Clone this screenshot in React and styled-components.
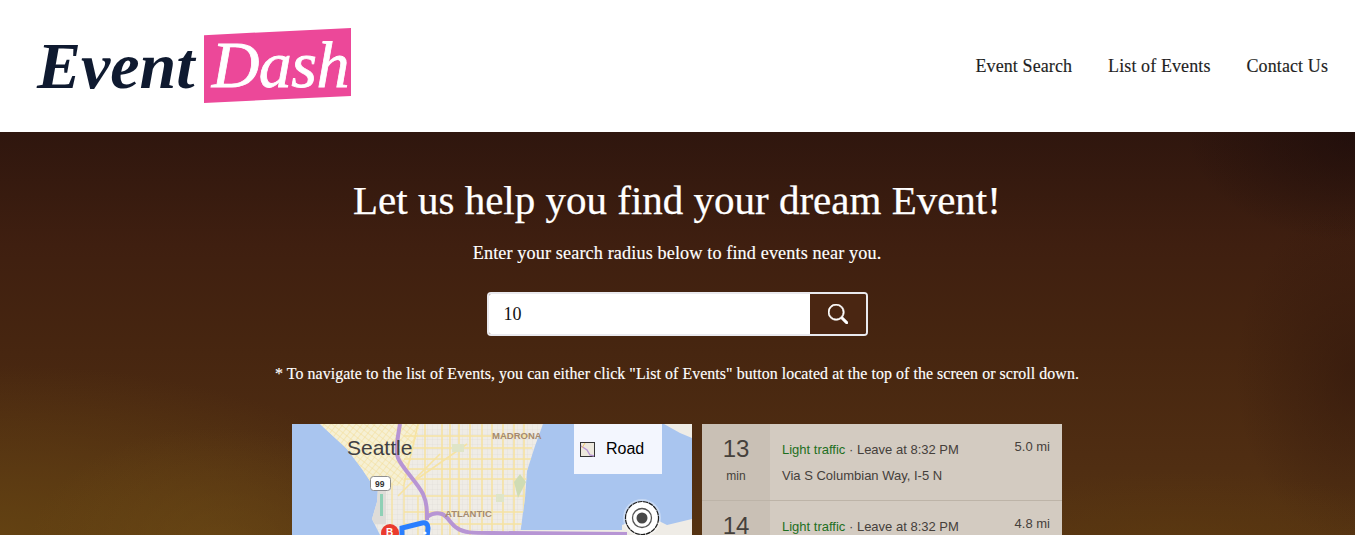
import React from "react";
import styled, { createGlobalStyle } from "styled-components";
import { BsSearch } from "react-icons/bs";

const serif = `"Liberation Serif", "Times New Roman", serif`;
const sans = `"Liberation Sans", Arial, sans-serif`;

const GlobalStyle = createGlobalStyle`
  html, body {
    margin: 0;
    height: 100%;
    overflow: hidden;
    background: #fff;
    font-family: ${serif};
  }
`;

const Page = styled.div`
  height: 535px;
  overflow: hidden;
`;

const Header = styled.header`
  display: flex;
  justify-content: space-between;
  align-items: center;
  height: 132px;
  padding: 0 27px 0 37px;
  box-sizing: border-box;
  background: #fff;
`;

const Logo = styled.div`
  display: flex;
  align-items: center;
  margin-top: -1px;
  font-family: ${serif};
  font-style: italic;
  font-size: 66px;
  line-height: 1;
`;

const LogoEvent = styled.span`
  width: 167px;
  color: #0f1a30;
  font-weight: 700;
`;

const LogoDash = styled.span`
  display: flex;
  align-items: center;
  justify-content: flex-end;
  box-sizing: border-box;
  width: 147px;
  height: 75px;
  padding: 0 2px 2px 0;
  color: #fff;
  background: #ec4899;
  letter-spacing: -0.5px;
  -webkit-text-stroke: 0.8px #fff;
  clip-path: polygon(0 9.5%, 100% 0, 100% 90.5%, 0 100%);
`;

const Nav = styled.nav`
  display: flex;
  gap: 36px;
`;

const NavLink = styled.a`
  color: #1f1f1f;
  font-size: 18px;
  letter-spacing: 0.1px;
  -webkit-text-stroke: 0.15px #1f1f1f;
`;

const Hero = styled.section`
  display: flex;
  flex-direction: column;
  align-items: center;
  height: 403px;
  padding: 46px 1px 0 0;
  box-sizing: border-box;
  color: #fff;
  background:
    radial-gradient(ellipse 190px 130px at 215px 425px, rgba(112, 78, 22, 0.55), transparent),
    radial-gradient(ellipse 420px 170px at 0 403px, rgba(105, 72, 18, 0.7), transparent),
    radial-gradient(ellipse 260px 70px at 1180px 410px, rgba(95, 60, 15, 0.5), transparent),
    radial-gradient(ellipse 170px 110px at 1355px 0, rgba(25, 10, 10, 0.6), transparent),
    radial-gradient(ellipse 120px 170px at 1355px 240px, rgba(45, 20, 12, 0.5), transparent),
    linear-gradient(180deg, #2f160e 0%, #3f1f10 28%, #472610 55%, #4f2d12 80%, #553312 100%);
  & > * {
    flex: none;
  }
`;

const Title = styled.h1`
  margin: 0;
  font-size: 41px;
  font-weight: 400;
  line-height: 44px;
  -webkit-text-stroke: 0.25px #fff;
`;

const Subtitle = styled.p`
  margin: 19px 0 0;
  font-size: 18.2px;
  line-height: 24px;
  letter-spacing: 0.12px;
  -webkit-text-stroke: 0.15px #fff;
`;

const SearchForm = styled.form`
  display: flex;
  box-sizing: border-box;
  width: 381px;
  height: 44px;
  margin-top: 27px;
  border: 2px solid #e9e9ee;
  border-radius: 4px;
  overflow: hidden;
`;

const SearchInput = styled.input`
  flex: 1;
  min-width: 0;
  padding: 0 15px;
  border: 0;
  outline: 0;
  background: #fff;
  color: #111;
  font-family: ${serif};
  font-size: 18px;
`;

const SearchButton = styled.button`
  display: flex;
  align-items: center;
  justify-content: center;
  width: 56px;
  padding: 0;
  border: 0;
  background: #4a2612;
  color: #fff;
  font-size: 20px;
`;

const Note = styled.p`
  margin: 27px 0 0;
  font-size: 15.9px;
  line-height: 22px;
  letter-spacing: 0.07px;
  -webkit-text-stroke: 0.15px #fff;
`;

const Widgets = styled.div`
  display: flex;
  gap: 10px;
  margin-top: 39px;
`;

const MapBox = styled.div`
  position: relative;
  width: 400px;
  height: 300px;
  overflow: hidden;
  background: #a9c5ef;
`;

const MapLabel = styled.text`
  font-family: ${sans};
  font-size: ${(p) => p.$size}px;
  font-weight: ${(p) => (p.$bold ? 700 : 400)};
  fill: ${(p) => p.$color};
`;

const RoadToggle = styled.div`
  position: absolute;
  top: 0;
  left: 282px;
  display: flex;
  align-items: center;
  gap: 11px;
  box-sizing: border-box;
  width: 88px;
  height: 50px;
  padding-left: 6px;
  background: #f3f6fe;
  color: #000;
  font-family: ${sans};
  font-size: 16px;
`;

const Directions = styled.div`
  width: 360px;
  height: 300px;
  background: #d3cbc1;
  color: #45403b;
  font-family: ${sans};
`;

const Route = styled.div`
  display: flex;
  height: 76px;
  border-bottom: 1px solid #bdb4a8;
`;

const Duration = styled.div`
  display: flex;
  flex-direction: column;
  align-items: center;
  flex: none;
  width: 68px;
  padding-top: 11px;
  box-sizing: border-box;
  background: #c9c0b5;
`;

const Minutes = styled.span`
  font-size: 24px;
  line-height: 28px;
`;

const MinLabel = styled.span`
  margin-top: 5px;
  font-size: 12px;
  line-height: 16px;
`;

const RouteInfo = styled.div`
  flex: 1;
  padding: 17px 12px 0;
  font-size: 13px;
`;

const RouteTop = styled.div`
  display: flex;
  justify-content: space-between;
  line-height: 18px;
`;

const Traffic = styled.span`
  color: #1e6f1e;
`;

const Distance = styled.span`
  margin-top: -3px;
`;

const Via = styled.div`
  margin-top: 8px;
  line-height: 18px;
`;

const verticals = [133, 150, 158, 167, 178, 190, 200, 211, 222, 232];
const horizontals = [12, 24, 35, 45, 55, 72, 88, 100];
const shoreLand =
  "M28 0 L55 25 L70 45 L80 60 L86 64 L85 78 L80 95 L88 111 L88 140 L228 140 L228 111 L233 74 L235 47 L243 22 L251 0 Z";

const MapArt = () => (
  <svg width="400" height="300" viewBox="0 0 400 300">
    <defs>
      <pattern id="blocks" width="5" height="5" patternUnits="userSpaceOnUse">
        <rect width="5" height="5" fill="#efece6" />
        <path d="M0 0H5M0 0V5" stroke="#dcdad6" strokeWidth="0.6" />
      </pattern>
      <pattern id="downtown" width="5" height="5" patternUnits="userSpaceOnUse" patternTransform="rotate(38)">
        <rect width="5" height="5" fill="#f6f0d4" />
        <path d="M0 0H5M0 0V5" stroke="#f2dd97" strokeWidth="1" />
      </pattern>
      <clipPath id="land">
        <path d={shoreLand} />
      </clipPath>
    </defs>

    <path d={shoreLand} fill="url(#blocks)" />
    <path d="M372 0 L400 0 L400 14 L388 9 Z" fill="#efece6" />
    <path d="M330 101 L342 97 L367 97 L375 101 L400 95 L400 140 L330 140 Z" fill="#efece6" />
    <path d="M228 140 L228 106 L330 106 L330 140 Z" fill="#efece6" />

    <g clipPath="url(#land)">
      <path d="M28 0 L128 0 L112 62 L80 60 Z" fill="url(#downtown)" />
      <rect x="80" y="66" width="14" height="34" fill="#dedcd8" />
      <rect x="88" y="70" width="3" height="22" fill="#8fd0b5" />
      {verticals.map((x) => (
        <path key={x} d={`M${x} 0V111`} stroke="#f6e3a2" strokeWidth="1.6" />
      ))}
      {horizontals.map((y) => (
        <path key={y} d={`M112 ${y}H240`} stroke="#f6e3a2" strokeWidth="1.6" />
      ))}
      <path d="M126 0 L112 60 M118 60 L175 20 M106 72 L148 30" stroke="#f6e3a2" strokeWidth="1.6" fill="none" />
      <path d="M100 60V111M112 60V111M126 72V111" stroke="#f6e3a2" strokeWidth="1.4" />
      <path d="M222 58 L228 50 L234 58 L226 74 Z" fill="#cfdcb4" />
      <path d="M160 20 h12 v8 h-12 Z M204 70 h8 v8 h-8 Z" fill="#dfe5c8" />
    </g>

    <path
      d="M108 0 C106 12 103 26 106 34 C110 44 125 58 131 70 C135 79 135 86 135 96"
      fill="none"
      stroke="#b795d4"
      strokeWidth="4"
    />
    <path
      d="M135 93 C139 90 144 88 150 90 C156 92 158 100 165 104 C172 109 180 109 200 109 L335 110"
      fill="none"
      stroke="#b795d4"
      strokeWidth="4"
    />
    <path d="M110 114 L110 104 L130 99 Q136 98 136 104 L135 114" fill="none" stroke="#2a7fff" strokeWidth="5" />
    <circle cx="133" cy="109" r="1.6" fill="#fff" />
    <circle cx="98" cy="109" r="9" fill="#ea3b2e" />
    <MapLabel x="94" y="112" $size={10} $bold $color="#fff">B</MapLabel>

    <MapLabel x="55" y="31" $size={21} $color="#3f3f44">Seattle</MapLabel>
    <MapLabel x="200" y="15" $size={9.5} $bold $color="#a58a6f">MADRONA</MapLabel>
    <MapLabel x="153" y="93" $size={9.5} $bold $color="#a58a6f">ATLANTIC</MapLabel>

    <rect x="78.5" y="52.5" width="20" height="14" rx="3" fill="#fff" stroke="#8f8f8f" />
    <MapLabel x="83" y="63" $size={8.5} $bold $color="#333">99</MapLabel>

    <circle cx="350" cy="94" r="19" fill="#fff" opacity="0.35" />
    <circle cx="350" cy="94" r="16.5" fill="#fff" stroke="#1c1c1c" strokeWidth="1.2" strokeDasharray="5 0.6" />
    <circle cx="350" cy="94" r="9.5" fill="none" stroke="#555" strokeWidth="1.3" />
    <circle cx="350" cy="94" r="5.5" fill="#484848" />
  </svg>
);

const RoadIcon = () => (
  <svg width="15" height="15" viewBox="0 0 15 15">
    <rect x="0.5" y="0.5" width="14" height="14" fill="#ece8dd" stroke="#333" />
    <path d="M1 4 L7 8 L10 13 L14 14" fill="none" stroke="#b795d4" strokeWidth="1.4" />
    <path d="M5 1 L2 6" fill="none" stroke="#f0c96e" strokeWidth="1" />
  </svg>
);

const routes = [
  { min: 13, miles: "5.0 mi", via: "Via S Columbian Way, I-5 N" },
  { min: 14, miles: "4.8 mi", via: "Via Rainier Ave S" },
];

const App = () => {
  return (
    <Page>
      <GlobalStyle />
      <Header>
        <Logo>
          <LogoEvent>Event</LogoEvent>
          <LogoDash>Dash</LogoDash>
        </Logo>
        <Nav>
          <NavLink>Event Search</NavLink>
          <NavLink>List of Events</NavLink>
          <NavLink>Contact Us</NavLink>
        </Nav>
      </Header>
      <Hero>
        <Title>Let us help you find your dream Event!</Title>
        <Subtitle>Enter your search radius below to find events near you.</Subtitle>
        <SearchForm onSubmit={(e) => e.preventDefault()}>
          <SearchInput defaultValue="10" />
          <SearchButton type="submit" aria-label="Search">
            <BsSearch stroke="currentColor" strokeWidth={0.5} />
          </SearchButton>
        </SearchForm>
        <Note>
          * To navigate to the list of Events, you can either click "List of Events" button located at the top of the screen or scroll down.
        </Note>
        <Widgets>
          <MapBox>
            <MapArt />
            <RoadToggle>
              <RoadIcon />
              Road
            </RoadToggle>
          </MapBox>
          <Directions>
            {routes.map((r) => (
              <Route key={r.min}>
                <Duration>
                  <Minutes>{r.min}</Minutes>
                  <MinLabel>min</MinLabel>
                </Duration>
                <RouteInfo>
                  <RouteTop>
                    <span>
                      <Traffic>Light traffic</Traffic> · Leave at 8:32 PM
                    </span>
                    <Distance>{r.miles}</Distance>
                  </RouteTop>
                  <Via>{r.via}</Via>
                </RouteInfo>
              </Route>
            ))}
          </Directions>
        </Widgets>
      </Hero>
    </Page>
  );
};

export default App;
